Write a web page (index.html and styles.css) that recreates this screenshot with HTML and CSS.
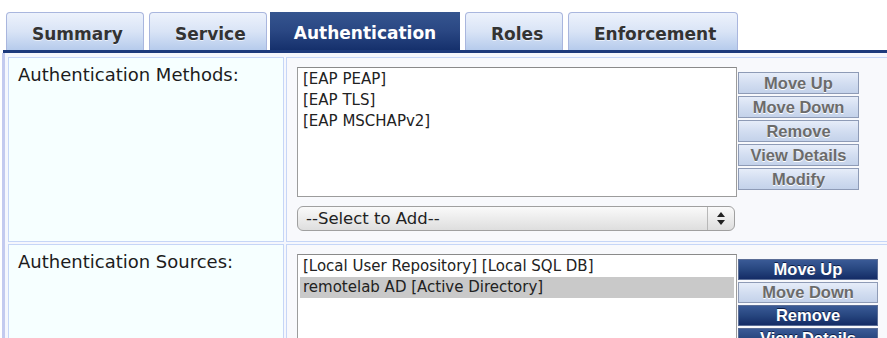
FILE: index.html
```html
<!DOCTYPE html>
<html lang="en">

<head>
  <meta charset="UTF-8">
  <title>Service - Authentication</title>
  <link rel="stylesheet" href="styles.css">
</head>

<body>

  <!-- Tabs -->
  <ul class="tabs">
    <li class="tab">Summary</li>
    <li class="tab">Service</li>
    <li class="tab active">Authentication</li>
    <li class="tab">Roles</li>
    <li class="tab">Enforcement</li>
  </ul>

  <!-- Authentication panel -->
  <div class="panel">
    <div class="form-grid">

      <div class="label-cell">Authentication Methods:</div>
      <div class="field-cell">
        <div class="field-main">
          <div class="listbox methods">
            <div class="option">[EAP PEAP]</div>
            <div class="option">[EAP TLS]</div>
            <div class="option">[EAP MSCHAPv2]</div>
          </div>
          <div class="select">
            <span>--Select to Add--</span>
            <span class="select-arrows">
              <svg width="8" height="13" viewBox="0 0 8 13">
                <path d="M4 0 L8 5 L0 5 Z M0 8 L8 8 L4 13 Z" fill="#222" />
              </svg>
            </span>
          </div>
        </div>
        <div class="btn-col">
          <button class="btn">Move Up</button>
          <button class="btn">Move Down</button>
          <button class="btn">Remove</button>
          <button class="btn">View Details</button>
          <button class="btn">Modify</button>
        </div>
      </div>

      <div class="label-cell">Authentication Sources:</div>
      <div class="field-cell">
        <div class="field-main">
          <div class="listbox sources">
            <div class="option">[Local User Repository] [Local SQL DB]</div>
            <div class="option selected">remotelab AD [Active Directory]</div>
          </div>
        </div>
        <div class="btn-col wide">
          <button class="btn on">Move Up</button>
          <button class="btn">Move Down</button>
          <button class="btn on">Remove</button>
          <button class="btn on">View Details</button>
        </div>
      </div>

    </div>
  </div>

</body>

</html>
```

FILE: styles.css
```css
/* Reset */
* {
  margin: 0;
  padding: 0;
  box-sizing: border-box;
}

body {
  font-family: "DejaVu Sans", Verdana, sans-serif;
  background-color: #fff;
  color: #222;
  overflow: hidden;
}

/* Tabs */
.tabs {
  list-style: none;
  display: flex;
  align-items: flex-end;
  gap: 5px;
  margin-left: 3px;
  padding: 12px 0 0 3px;
  border-bottom: 3px solid #1d3a7c;
}

.tab {
  height: 38px;
  padding: 0 25px;
  line-height: 43px;
  font-size: 17px;
  font-weight: bold;
  color: #333;
  text-shadow: 0 1px 0 rgba(255, 255, 255, 0.6);
  background: linear-gradient(#edf2fc, #d9e4f6 50%, #b6cbec);
  border: 1px solid #a9b6de;
  border-bottom: none;
  border-radius: 4px 4px 0 0;
}

.tab:nth-child(1) {
  width: 138px;
}

.tab:nth-child(2) {
  width: 118px;
  margin-right: -2px;
}

.tab:nth-child(4) {
  width: 98px;
}

.tab:nth-child(5) {
  width: 170px;
}

.tab.active {
  width: 190px;
  height: 38px;
  color: #fff;
  text-shadow: none;
  background: linear-gradient(#35558f, #2a4783 50%, #15306c);
  border: none;
  border-radius: 0;
  text-align: center;
  padding: 0;
}

/* Panel */
.panel {
  margin-left: 2px;
  border-left: 3px solid #c3caef;
  padding: 4px 0 0 3px;
  background-color: #f5f7fd;
}

.form-grid {
  display: grid;
  grid-template-columns: 276px 1fr;
  grid-template-rows: 185px 100px;
  gap: 2px;
}

.label-cell {
  background-color: #f6ffff;
  border: 1px solid #c6d6f7;
  padding: 5px 0 0 9px;
  font-size: 18px;
  line-height: 24px;
  color: #1c1c1c;
}

.field-cell {
  display: flex;
  background-color: #f8f9fc;
  border: 1px solid #c6d6f7;
  border-right: none;
  padding: 9px 0 0 10px;
}

.field-main {
  width: 440px;
}

/* Listboxes */
.listbox {
  background-color: #fff;
  border: 1px solid #9c9c9c;
  border-top-color: #8a8a8a;
  padding: 1px 2px;
  font-family: "DejaVu Sans", sans-serif;
  font-size: 15px;
}

.listbox.methods {
  height: 130px;
}

.listbox.sources {
  height: 110px;
}

.option {
  height: 21px;
  line-height: 21px;
  padding-left: 3px;
  color: #222;
}

.option.selected {
  background-color: #c9c9c9;
}

/* Select */
.select {
  display: flex;
  justify-content: space-between;
  margin-top: 9px;
  width: 438px;
  height: 25px;
  border: 1px solid #a0a0a0;
  border-radius: 6px;
  background: linear-gradient(#fafafa, #ececec 50%, #dedede);
  font-size: 16.5px;
  line-height: 23px;
  padding-left: 8px;
  color: #222;
}

.select-arrows {
  display: flex;
  align-items: center;
  justify-content: center;
  width: 27px;
  border-left: 1px solid #b8b8b8;
}

/* Buttons */
.btn-col {
  display: flex;
  flex-direction: column;
  gap: 2px;
  margin: 5px 0 0 1px;
  width: 121px;
}

.btn-col.wide {
  width: 140px;
}

.btn {
  height: 22px;
  font-family: "Liberation Sans", Arial, sans-serif;
  font-size: 16.5px;
  font-weight: bold;
  color: #6b6b6b;
  text-shadow: 0 1px 0 #fff;
  background: linear-gradient(#e6edf9, #d3def1 50%, #c4d2ea);
  border: 1px solid #8e9bb6;
  cursor: pointer;
}

.btn.on {
  color: #fff;
  text-shadow: 0 -1px 0 #0d1e47;
  background: linear-gradient(#3a5a96, #27467f 50%, #142c66);
  border-color: #5a6d96;
}
```
